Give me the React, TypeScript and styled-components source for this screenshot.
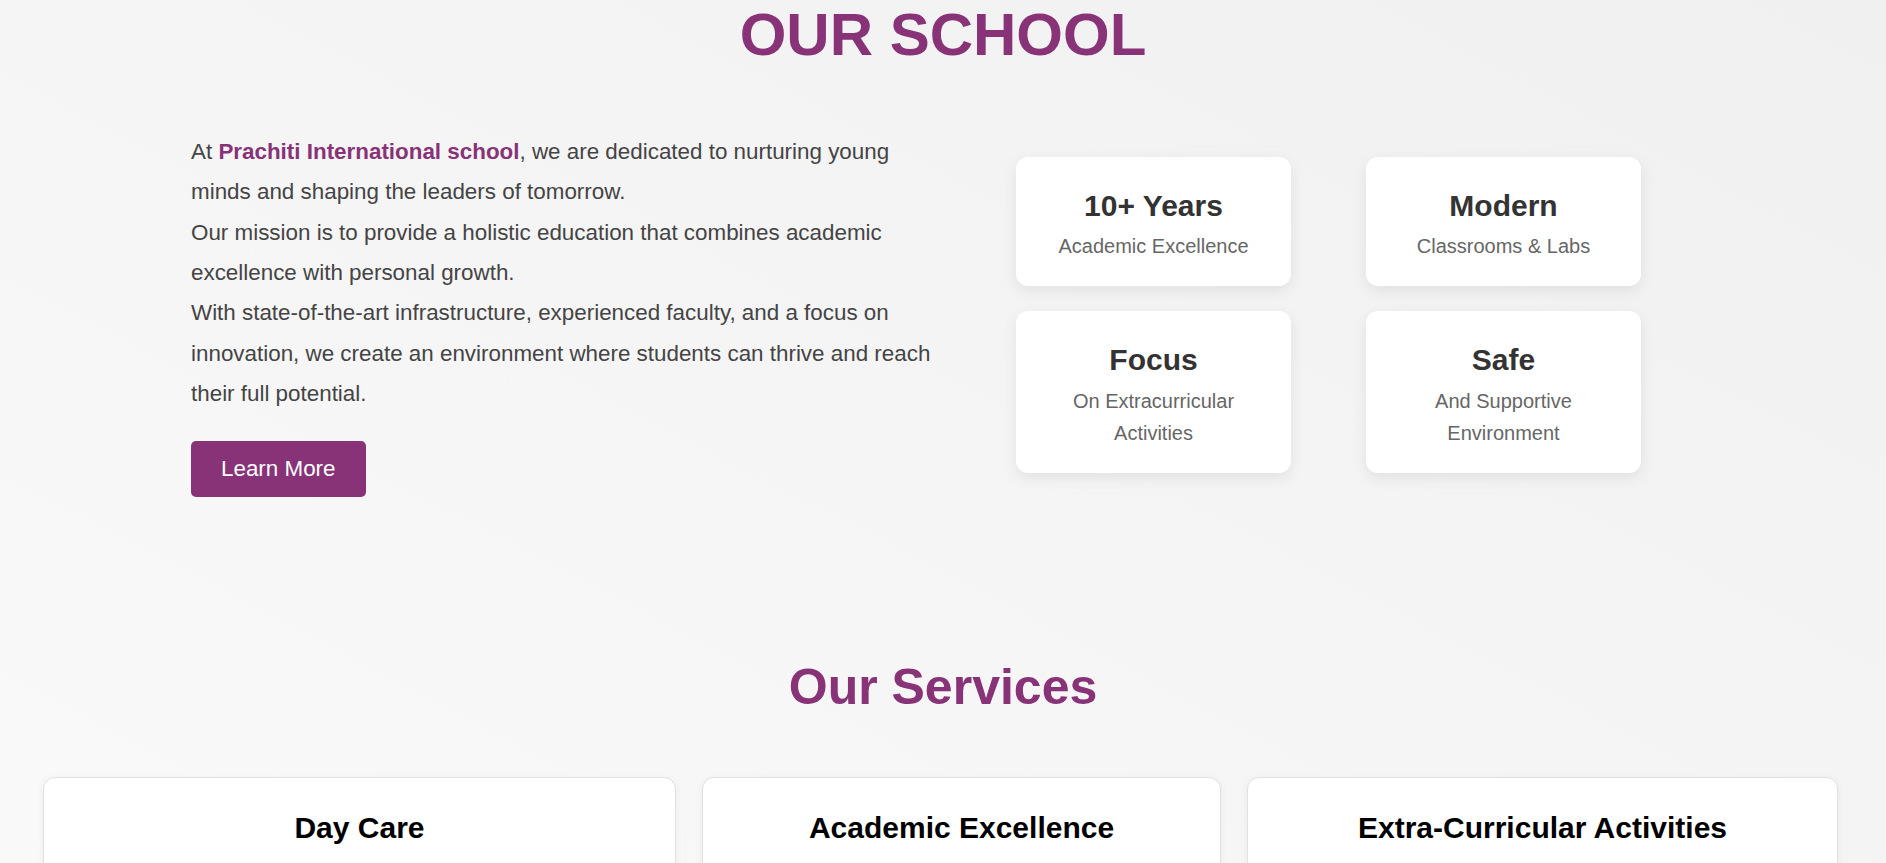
import React from "react";
import styled, { createGlobalStyle } from "styled-components";

const purple = "#883277";

const GlobalStyle = createGlobalStyle`
  * { box-sizing: border-box; }
  html, body {
    margin: 0;
    padding: 0;
  }
  body {
    font-family: "Liberation Sans", Arial, Helvetica, sans-serif;
    background: #f5f5f5;
  }
`;

const Page = styled.div`
  min-height: 1000px;
  background: linear-gradient(to top right, #fafafa 0%, #f5f5f5 50%, #f0f0f0 100%);
  overflow: hidden;
`;

const AboutSection = styled.section`
  display: flex;
  flex-direction: column;
`;

const SectionTitle = styled.h1<{ $size: number }>`
  margin: 0;
  text-align: center;
  color: ${purple};
  font-size: ${(p) => p.$size}px;
  font-weight: 700;
  line-height: 1.15;
`;

const AboutRow = styled.div`
  display: flex;
  align-items: center;
  gap: 65px;
  margin-top: 63px;
  padding-left: 191px;
`;

const AboutText = styled.div`
  width: 760px;
  display: flex;
  flex-direction: column;
  align-items: flex-start;
`;

const Paragraph = styled.p`
  margin: 0 0 27px;
  font-size: 22.4px;
  line-height: 1.8;
  color: #444;
`;

const Highlight = styled.strong`
  color: ${purple};
  font-weight: 700;
`;

const LearnButton = styled.button`
  font-family: inherit;
  font-size: 22.4px;
  line-height: normal;
  color: #fff;
  background: ${purple};
  border: none;
  border-radius: 5px;
  padding: 15px 30px;
  cursor: pointer;
`;

const StatsGrid = styled.div`
  display: grid;
  grid-template-columns: 275px 275px;
  column-gap: 75px;
  row-gap: 25px;
`;

const StatCard = styled.div`
  background: #fff;
  border-radius: 12px;
  box-shadow: 0 5px 15px rgba(0, 0, 0, 0.08);
  padding: 32px 20px 24px;
  text-align: center;
`;

const StatTitle = styled.h3`
  margin: 0 0 7px;
  font-size: 30px;
  line-height: 1.15;
  font-weight: 700;
  color: #333;
`;

const StatText = styled.p`
  margin: 0;
  font-size: 20px;
  line-height: 1.6;
  color: #666;
`;

const ServicesSection = styled.section`
  margin-top: 162px;
  display: flex;
  flex-direction: column;
`;

const ServicesRow = styled.div`
  display: flex;
  gap: 26px;
  margin-top: 60px;
  padding: 0 48px 0 43px;
`;

const ServiceCard = styled.div<{ $width: number }>`
  flex: 0 0 ${(p) => p.$width}px;
  min-height: 220px;
  background: #fff;
  border: 1px solid #e1e1e1;
  border-radius: 12px;
  box-shadow: 0 2px 8px rgba(0, 0, 0, 0.05);
  padding: 33px 20px;
  text-align: center;
`;

const ServiceTitle = styled.h3`
  margin: 0;
  font-size: 30px;
  line-height: 1.15;
  font-weight: 700;
  color: #000;
`;

const stats = [
  { title: "10+ Years", text: "Academic Excellence" },
  { title: "Modern", text: "Classrooms & Labs" },
  { title: "Focus", text: "On Extracurricular Activities" },
  { title: "Safe", text: "And Supportive Environment" },
];

const services = [
  { title: "Day Care", width: 633 },
  { title: "Academic Excellence", width: 519 },
  { title: "Extra-Curricular Activities", width: 591 },
];

export default function App() {
  return (
    <>
      <GlobalStyle />
      <Page>
        <AboutSection>
          <SectionTitle $size={60}>OUR SCHOOL</SectionTitle>
          <AboutRow>
            <AboutText>
              <Paragraph>
                At <Highlight>Prachiti International school</Highlight>, we are dedicated to
                nurturing young minds and shaping the leaders of tomorrow.
                <br />
                Our mission is to provide a holistic education that combines academic excellence
                with personal growth.
                <br />
                With state-of-the-art infrastructure, experienced faculty, and a focus on
                innovation, we create an environment where students can thrive and reach their
                full potential.
              </Paragraph>
              <LearnButton>Learn More</LearnButton>
            </AboutText>
            <StatsGrid>
              {stats.map((s) => (
                <StatCard key={s.title}>
                  <StatTitle>{s.title}</StatTitle>
                  <StatText>{s.text}</StatText>
                </StatCard>
              ))}
            </StatsGrid>
          </AboutRow>
        </AboutSection>
        <ServicesSection>
          <SectionTitle as="h2" $size={50}>
            Our Services
          </SectionTitle>
          <ServicesRow>
            {services.map((s) => (
              <ServiceCard key={s.title} $width={s.width}>
                <ServiceTitle>{s.title}</ServiceTitle>
              </ServiceCard>
            ))}
          </ServicesRow>
        </ServicesSection>
      </Page>
    </>
  );
}
